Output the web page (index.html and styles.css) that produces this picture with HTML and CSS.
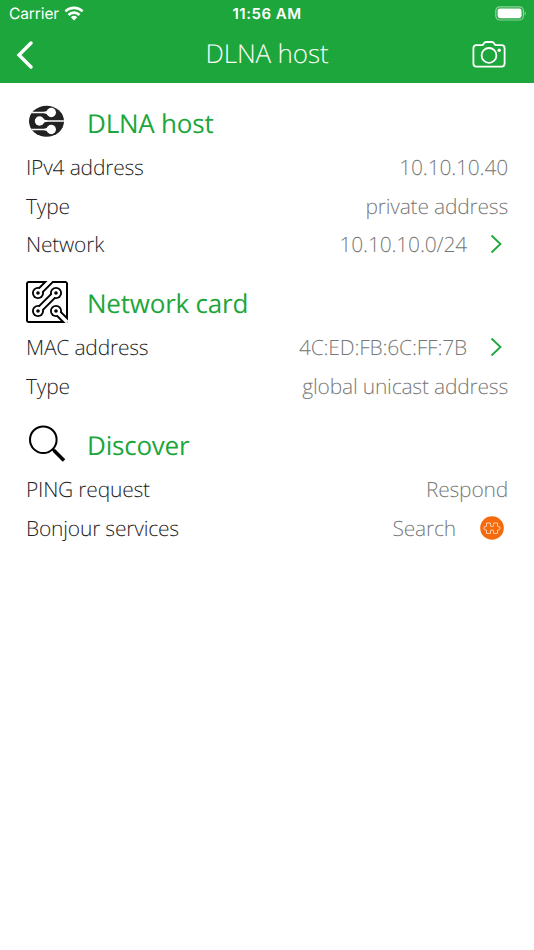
FILE: index.html
```html
<!DOCTYPE html>
<html lang="en">
<head>
<meta charset="utf-8">
<title>DLNA host</title>
<link rel="stylesheet" href="styles.css">
</head>
<body>
<header class="header">
  <div class="status">
    <div class="carrier">Carrier
      <svg class="wifi" viewBox="0 0 20 15" width="20" height="15"><g fill="none" stroke="#fff" stroke-width="2.7"><path d="M1.4 5.4a12.3 12.3 0 0 1 17.2 0"/><path d="M4.5 8.9a8 8 0 0 1 11 0"/></g><path fill="#fff" d="M6.8 11.3a4.7 4.7 0 0 1 6.4 0L10 14.5z"/></svg>
    </div>
    <div class="time">11:56 AM</div>
    <svg class="battery" viewBox="0 0 32 15" width="32" height="15"><rect x=".8" y=".8" width="27.6" height="13.2" rx="4" fill="none" stroke="#8dd29c" stroke-width="1.2"/><rect x="2.6" y="2.6" width="24" height="9.6" rx="2.4" fill="#fff"/><path d="M29.7 5.2q2.4 2.2 0 4.4z" fill="#8dd29c"/></svg>
  </div>
  <nav class="nav">
    <svg class="back" viewBox="0 0 18 28" width="18" height="28"><path d="M16 2 4 14l12 12" fill="none" stroke="#fff" stroke-width="3.4" stroke-linecap="round"/></svg>
    <h1 class="title">DLNA host</h1>
    <svg class="camera" viewBox="0 0 34 28" width="34" height="28" fill="none" stroke="#fff" stroke-width="1.8"><path d="M4.5 4.1h5.2c1 0 1.5-.5 2-1.4.6-1.2 1.2-1.7 2.7-1.7h5.2c1.5 0 2.1.5 2.7 1.7.5.9 1 1.4 2 1.4h5.2q3.1 0 3.1 3.1v15.3q0 3.1-3.1 3.1h-25q-3.1 0-3.1-3.1V7.2q0-3.1 3.1-3.1z"/><circle cx="17" cy="14.4" r="7.4"/><circle cx="27.2" cy="9.2" r="1.7" fill="#fff" stroke="none"/></svg>
  </nav>
</header>
<main>
  <section>
    <h2 class="heading">
      <svg class="icon" viewBox="0 0 42 42" width="42" height="42">
        <clipPath id="disc"><ellipse cx="20.5" cy="21.2" rx="17.5" ry="15.5"/></clipPath>
        <g clip-path="url(#disc)"><path fill="#222" d="M0 0h42v42H0z"/>
        <path fill="none" stroke="#fff" stroke-width="1.5" d="M0 12.500h24M14 21h28M0 29.500h24"/>
        <g fill="#fff"><circle cx="25.3" cy="12.5" r="4.700"/><circle cx="13.5" cy="21" r="4.7"/><circle cx="25.3" cy="29.500" r="4.700"/><path d="M17.500 12q3-.3 5-2.500v6q-2-2.200-5-2.500zM16.500 18q2 2.200 5 2.500v1q-3 .3-5 2.500zM17.500 29q3-.3 5-2.500v6q-2-2.200-5-2.500z"/></g></g>
      </svg>
      <span>DLNA host</span>
    </h2>
    <div class="row"><span>IPv4 address</span><span class="value">10.10.10.40</span></div>
    <div class="row"><span>Type</span><span class="value">private address</span></div>
    <div class="row"><span>Network</span><span class="value">10.10.10.0/24</span><svg class="chevron" viewBox="0 0 12 20" width="12" height="20"><path d="m1.5 1.5 9 8.5-9 8.5"/></svg></div>
  </section>
  <section>
    <h2 class="heading">
      <svg class="icon" viewBox="0 0 42 42" width="42" height="42" fill="none">
        <clipPath id="board"><rect width="42" height="42" rx="2"/></clipPath>
        <g clip-path="url(#board)">
          <rect x="1" y="1" width="40" height="40" rx="1.5" stroke="#000" stroke-width="2"/>
          <path stroke="#000" stroke-width="7.400" d="M12 12 25 -1M30 12 12 30M30 30l13 13"/>
          <g fill="#000"><circle cx="12" cy="12" r="6"/><circle cx="30" cy="12" r="6"/><circle cx="12" cy="30" r="6"/><circle cx="30" cy="30" r="6"/></g>
          <path stroke="#fff" stroke-width="3.400" d="M12 12 25 -1M30 12 12 30M30 30l13 13"/>
          <g fill="#000" stroke="#fff" stroke-width="2.4"><circle cx="12" cy="12" r="3"/><circle cx="30" cy="12" r="3"/><circle cx="12" cy="30" r="3"/><circle cx="30" cy="30" r="3"/></g>
        </g>
      </svg>
      <span>Network card</span>
    </h2>
    <div class="row"><span>MAC address</span><span class="value">4C:ED:FB:6C:FF:7B</span><svg class="chevron" viewBox="0 0 12 20" width="12" height="20"><path d="m1.5 1.5 9 8.5-9 8.5"/></svg></div>
    <div class="row"><span>Type</span><span class="value">global unicast address</span></div>
  </section>
  <section>
    <h2 class="heading">
      <svg class="icon" viewBox="0 0 42 42" width="42" height="42" fill="none" stroke="#000"><circle cx="17.3" cy="16.7" r="13.3" stroke-width="2"/><path d="m26.5 26 3 3" stroke-width="2.5"/><path d="m28 27.5 10 10" stroke-width="3.6"/></svg>
      <span>Discover</span>
    </h2>
    <div class="row"><span>PING request</span><span class="value">Respond</span></div>
    <div class="row"><span>Bonjour services</span><span class="value">Search</span><svg class="plugin" viewBox="0 0 24 24" width="24" height="24"><circle cx="12" cy="12" r="11.8" fill="#f56a0c"/><path d="M6.5 7h4v1.5q-1 2 1.5 2t1.5-2V7h4v3.500h1q1.500-.3 1.500 1.700t-1.500 1.700h-1v3.500h-4v-1.500q1-2-1.500-2t-1.500 2v1.500h-4v-3.500h-1Q4 14.200 4 12.200t1.500-1.700h1z" fill="none" stroke="#ffd0ae"/></svg></div>
  </section>
</main>
</body>
</html>
```
FILE: styles.css
```css
* { box-sizing: border-box; }
body {
  margin: 0;
  min-height: 950px;
  background: #fff;
  color: #222;
  font-family: "Open Sans", sans-serif;
  font-weight: 300;
  text-rendering: geometricPrecision;
}
svg { display: block; flex: none; }
.header { height: 83px; background: #1ca63b; color: #fff; }
.status {
  display: grid;
  grid-template-columns: 1fr auto 1fr;
  align-items: center;
  height: 27px;
  padding: 0 7px 0 9px;
  font-family: Inter, sans-serif;
  font-size: 15.5px;
  font-weight: 400;
}
.carrier { display: flex; align-items: center; gap: 5px; letter-spacing: -.1px; }
.time { margin-left: -2px; font-size: 15px; font-weight: 600; letter-spacing: .5px; }
.battery { justify-self: end; }
.nav {
  display: grid;
  grid-template-columns: 1fr auto 1fr;
  align-items: center;
  height: 56px;
  padding: 0 28px 0 15px;
}
.title {
  margin: -4px 0 0 13px;
  font-size: 26px;
  line-height: 36px;
  font-weight: 300;
  letter-spacing: -.15px;
}
.camera { justify-self: end; }
.heading {
  display: flex;
  align-items: center;
  gap: 19px;
  height: 64.6px;
  margin: 0;
  padding: 12px 26px 0;
  color: #1ca63b;
  font-size: 26px;
  line-height: 36px;
  font-weight: 400;
  letter-spacing: -.22px;
}
.heading span { padding-top: 3px; }
.row {
  display: flex;
  align-items: center;
  height: 38.67px;
  padding: 0 26px;
  font-size: 21px;
  line-height: 30px;
  letter-spacing: -.2px;
}
.row span { padding-top: 2px; }
.value { margin-left: auto; color: #777; }
.chevron { margin: 0 6px 0 23px; fill: none; stroke: #1ca63b; stroke-width: 1.8; }
.plugin { margin: 0 4px 0 24px; }
```
